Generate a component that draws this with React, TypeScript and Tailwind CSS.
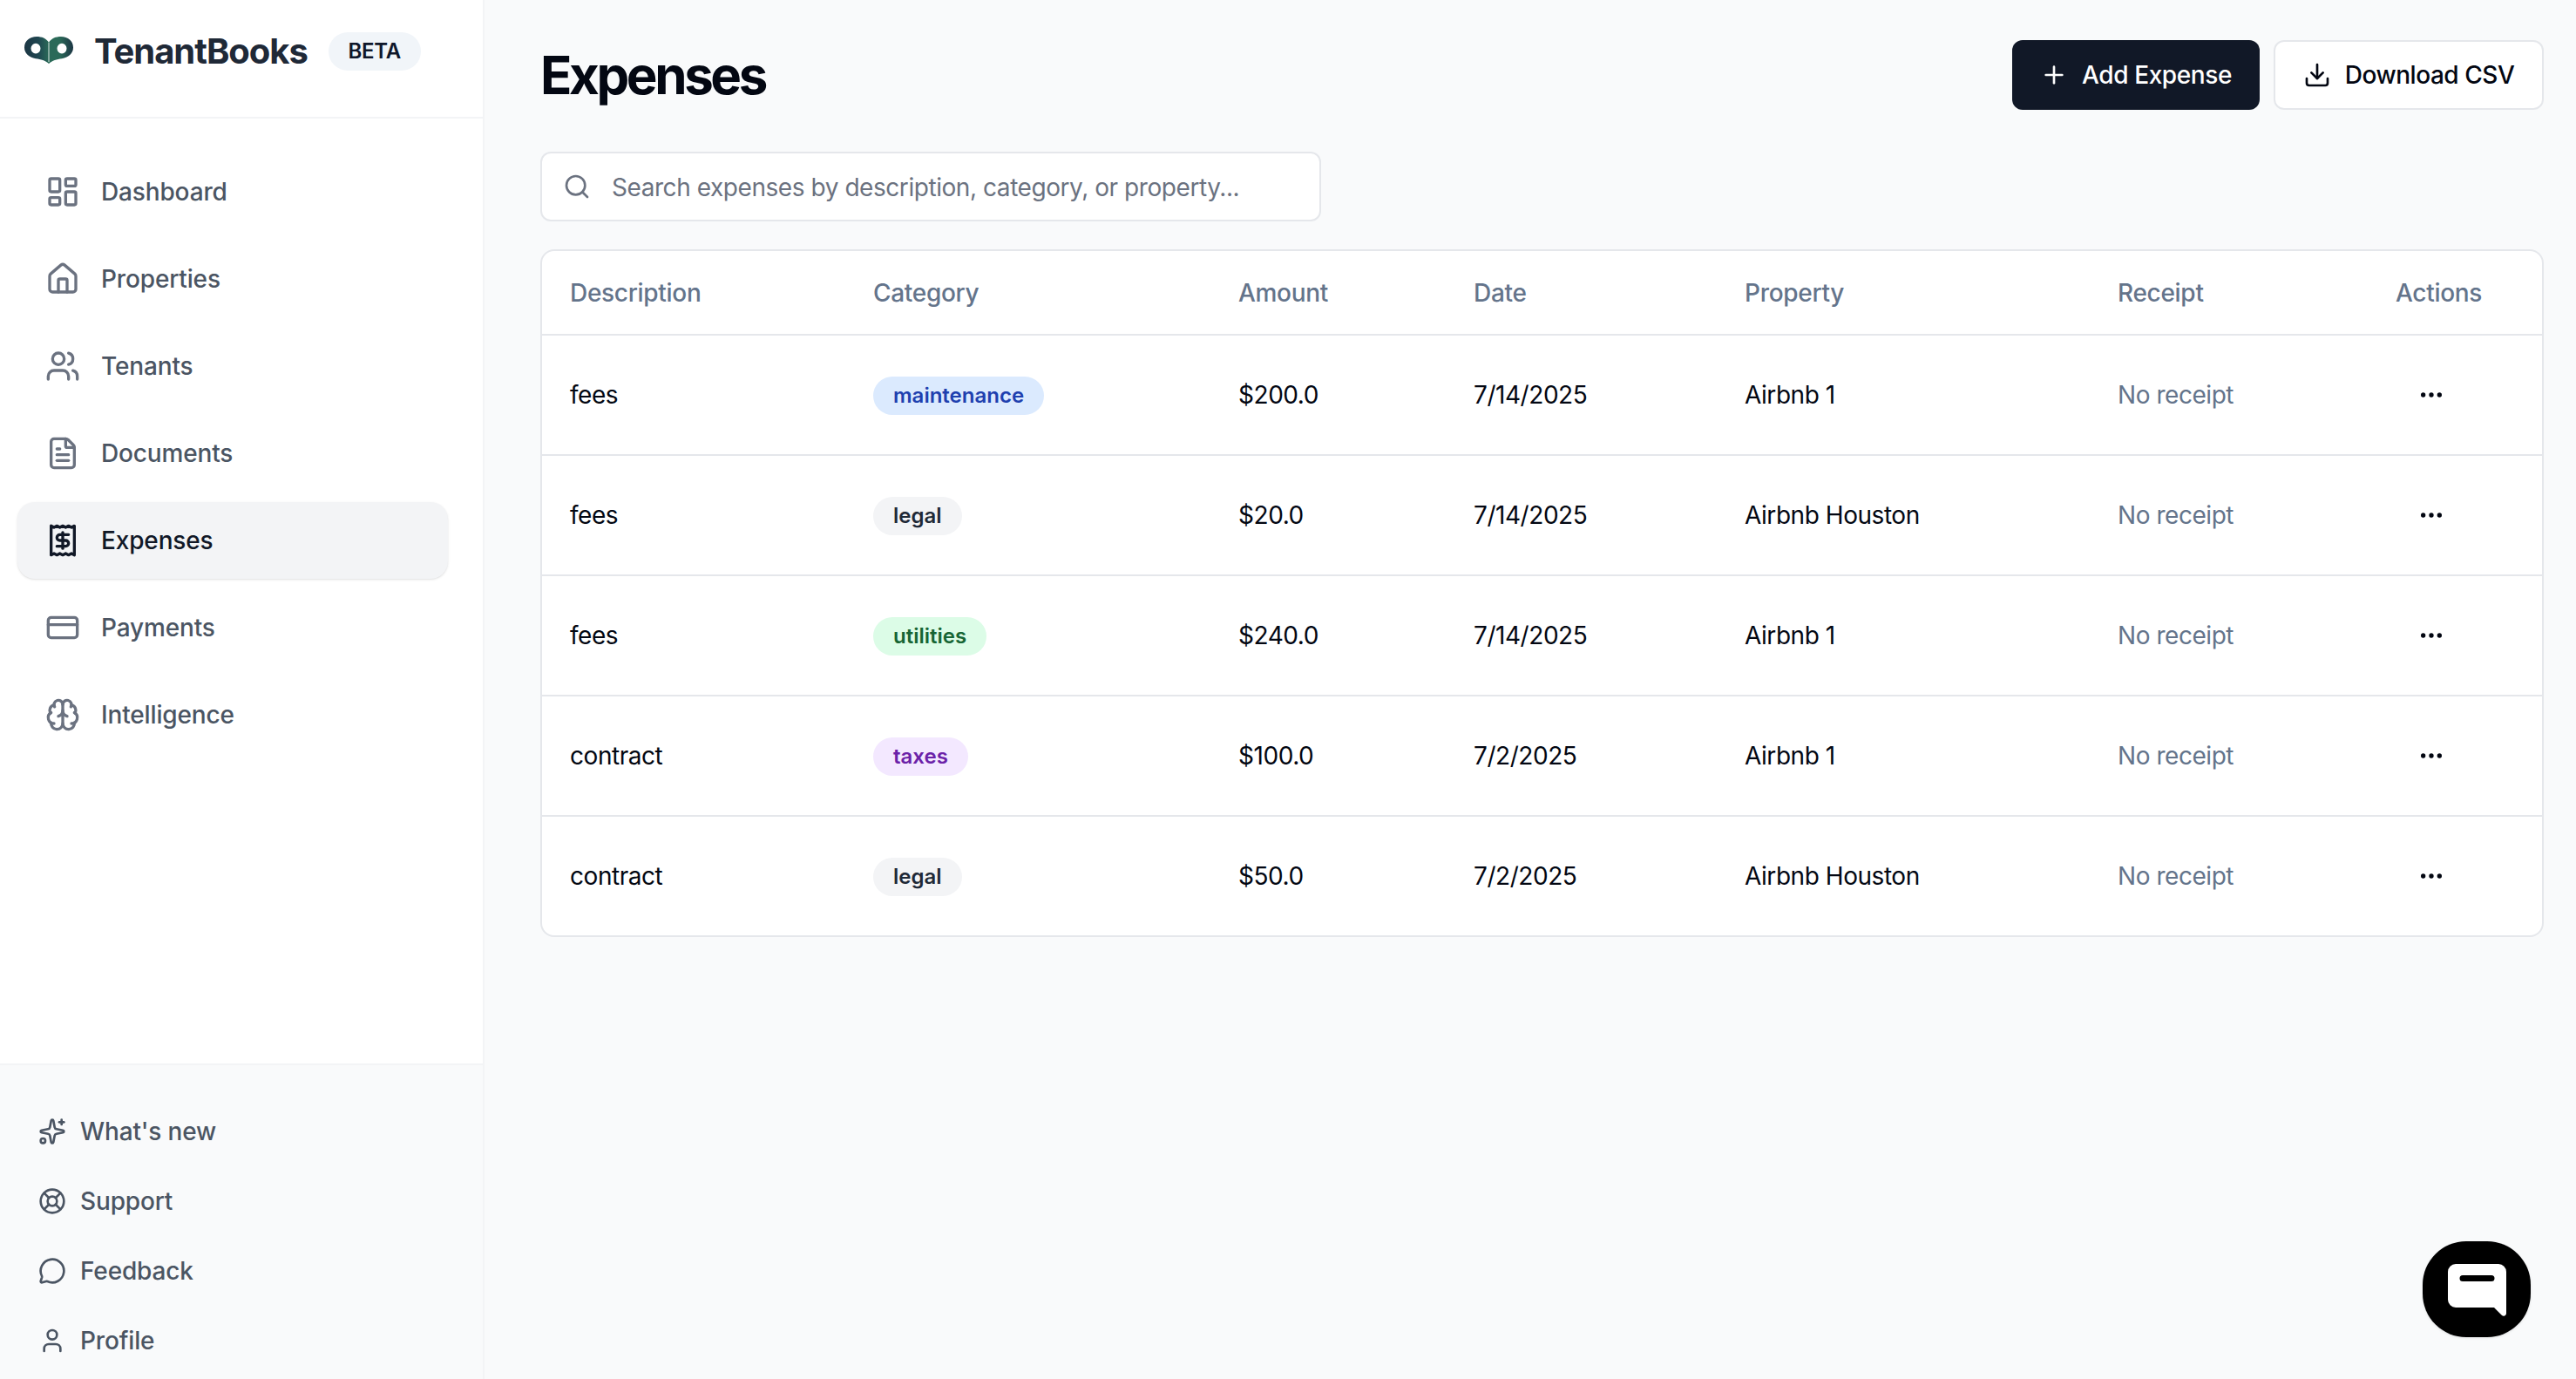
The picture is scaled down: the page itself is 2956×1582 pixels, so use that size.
import React from "react";
import {
  LayoutDashboard, House, Users, FileText, Receipt, CreditCard, Brain,
  Sparkles, LifeBuoy, MessageCircle, User, Plus, Download, Search, Ellipsis,
} from "lucide-react";

const nav = [
  { label: "Dashboard", Icon: LayoutDashboard },
  { label: "Properties", Icon: House },
  { label: "Tenants", Icon: Users },
  { label: "Documents", Icon: FileText },
  { label: "Expenses", Icon: Receipt, active: true },
  { label: "Payments", Icon: CreditCard },
  { label: "Intelligence", Icon: Brain },
];

const footer = [
  { label: "What's new", Icon: Sparkles },
  { label: "Support", Icon: LifeBuoy },
  { label: "Feedback", Icon: MessageCircle },
  { label: "Profile", Icon: User },
];

const badge: Record<string, string> = {
  maintenance: "bg-[#dbeafe] text-[#1e40af]",
  legal: "bg-[#f3f4f6] text-[#1f2937]",
  utilities: "bg-[#dcfce7] text-[#166534]",
  taxes: "bg-[#f3e8ff] text-[#6b21a8]",
};

const rows = [
  ["fees", "maintenance", "$200.0", "7/14/2025", "Airbnb 1"],
  ["fees", "legal", "$20.0", "7/14/2025", "Airbnb Houston"],
  ["fees", "utilities", "$240.0", "7/14/2025", "Airbnb 1"],
  ["contract", "taxes", "$100.0", "7/2/2025", "Airbnb 1"],
  ["contract", "legal", "$50.0", "7/2/2025", "Airbnb Houston"],
];

function Logo() {
  return (
    <svg width="56" height="31" viewBox="0 1 56 32" preserveAspectRatio="none" className="mb-[4px] shrink-0">
      <defs>
        <linearGradient id="book" x1="0" x2="1" y1="0" y2="0">
          <stop offset="0" stopColor="#1c3644" />
          <stop offset="0.28" stopColor="#1f4650" />
          <stop offset="0.5" stopColor="#2a6a58" />
          <stop offset="0.72" stopColor="#2a6a58" />
          <stop offset="1" stopColor="#1c3644" />
        </linearGradient>
      </defs>
      <path
        fillRule="evenodd"
        fill="url(#book)"
        d="M28 33C24 29 19 28 13 27C5 25.500 0 21 0 14C0 6 6 1 14 1C20 1 25 3 28 8C31 3 36 1 42 1C50 1 56 6 56 14C56 21 51 25.500 43 27C37 28 32 29 28 33ZM13 9A5.500 6 0 1 0 13.010 21A5.500 6 0 1 0 13 9ZM43 9A5.500 6 0 1 0 43.010 21A5.500 6 0 1 0 43 9Z"
      />
      <path d="M28 8V31" stroke="#dfeae6" strokeWidth="1" />
    </svg>
  );
}

export default function App() {
  return (
    <div className="flex h-screen w-full overflow-hidden bg-[#f9fafb] font-['Inter',sans-serif] antialiased">
      <aside className="flex h-full w-[556px] shrink-0 flex-col border-r-2 border-[#f3f4f6] bg-white">
        <div className="flex h-[136px] shrink-0 items-center gap-[24px] border-b-2 border-[#f3f4f6] pb-[16px] pl-[28px]">
          <Logo />
          <span className="text-[40px] leading-[56px] font-bold tracking-[-1.05px] text-[#1f2937]">TenantBooks</span>
          <span className="flex h-[44px] w-[106px] items-center justify-center rounded-full bg-[#f1f5f9] text-[24px] font-semibold tracking-[-0.2px] text-[#0f172a]">BETA</span>
        </div>
        <nav className="flex flex-1 flex-col gap-[12px] pt-[40px] pr-[40px] pl-[20px]">
          {nav.map(({ label, Icon, active }) => (
            <div
              key={label}
              className={
                active
                  ? "flex h-[88px] items-center gap-[24px] rounded-[20px] bg-[#f3f4f6] pl-[32px] text-[28px] font-medium tracking-[-0.15px] text-[#111827] shadow-sm"
                  : "flex h-[88px] items-center gap-[24px] rounded-[20px] pl-[32px] text-[28px] font-medium tracking-[-0.15px] text-[#4b5563]"
              }
            >
              <Icon size={40} className={active ? "text-[#111827]" : "text-[#6b7280]"} />
              <span>{label}</span>
            </div>
          ))}
        </nav>
        <div className="flex shrink-0 flex-col border-t-2 border-[#f3f4f6] bg-[#f9fafb] pt-[36px] pb-[4px] pl-[44px]">
          {footer.map(({ label, Icon }) => (
            <div key={label} className="flex h-[80px] items-center gap-[16px] text-[28px] font-medium tracking-[-0.15px] text-[#4b5563]">
              <Icon size={32} />
              <span>{label}</span>
            </div>
          ))}
        </div>
      </aside>

      <main className="flex min-w-0 flex-1 flex-col pt-[46px] pr-[37px] pl-[64px]">
        <div className="flex items-center justify-between">
          <h1 className="text-[60px] leading-[80px] font-bold tracking-[-3.4px] text-[#030712]">Expenses</h1>
          <div className="flex gap-[16px]">
            <button className="flex h-[80px] w-[284px] items-center justify-center gap-[16px] rounded-[12px] bg-[#111827] text-[28px] font-medium tracking-[-0.4px] text-white">
              <Plus size={32} />
              Add Expense
            </button>
            <button className="flex h-[80px] w-[310px] items-center justify-center gap-[16px] rounded-[12px] border-2 border-[#e5e7eb] bg-white text-[28px] font-medium tracking-[-0.45px] text-[#030712]">
              <Download size={32} />
              Download CSV
            </button>
          </div>
        </div>

        <div className="mt-[48px] flex h-[80px] w-[896px] items-center gap-[24px] rounded-[12px] border-2 border-[#e5e7eb] bg-white pl-[24px]">
          <Search size={32} className="shrink-0 text-[#6b7280]" />
          <span className="pt-[2px] text-[28px] tracking-[-0.44px] text-[#6b7280]">Search expenses by description, category, or property...</span>
        </div>

        <div className="mt-[32px] overflow-hidden rounded-[16px] border-2 border-[#e5e7eb] bg-white">
          <table className="w-full table-fixed border-separate border-spacing-0 text-left">
            <thead>
              <tr className="text-[28px] font-medium tracking-[-0.3px] text-[#64748b]">
                <th className="h-[97px] w-[348px] border-b-2 border-[#e5e7eb] pl-[32px] font-medium">Description</th>
                <th className="h-[97px] w-[419px] border-b-2 border-[#e5e7eb] pl-[32px] font-medium">Category</th>
                <th className="h-[97px] w-[270px] border-b-2 border-[#e5e7eb] pl-[32px] font-medium">Amount</th>
                <th className="h-[97px] w-[311px] border-b-2 border-[#e5e7eb] pl-[32px] font-medium">Date</th>
                <th className="h-[97px] w-[428px] border-b-2 border-[#e5e7eb] pl-[32px] font-medium">Property</th>
                <th className="h-[97px] w-[319px] border-b-2 border-[#e5e7eb] pl-[32px] font-medium">Receipt</th>
                <th className="h-[97px] border-b-2 border-[#e5e7eb] pl-[32px] font-medium">Actions</th>
              </tr>
            </thead>
            <tbody className="text-[28px] tracking-[-0.45px] text-[#030712]">
              {rows.map((r, i) => {
                const cell =
                  i < rows.length - 1
                    ? "h-[138px] border-b-2 border-[#e5e7eb] pl-[32px]"
                    : "h-[136px] pl-[32px]";
                return (
                  <tr key={i}>
                    <td className={cell}>{r[0]}</td>
                    <td className={cell}>
                      <span className={"inline-flex h-[44px] items-center rounded-full px-[23px] text-[24px] font-semibold tracking-normal " + badge[r[1]]}>{r[1]}</span>
                    </td>
                    <td className={cell}>{r[2]}</td>
                    <td className={cell}>{r[3]}</td>
                    <td className={cell}>{r[4]}</td>
                    <td className={cell + " text-[#64748b]"}>No receipt</td>
                    <td className={cell}>
                      <button className="ml-[9px] flex h-[64px] w-[64px] items-center justify-center">
                        <Ellipsis size={32} />
                      </button>
                    </td>
                  </tr>
                );
              })}
            </tbody>
          </table>
        </div>
      </main>

      <div className="fixed right-[52px] bottom-[48px] flex h-[110px] w-[124px] items-center justify-center rounded-[50px] bg-black shadow-sm">
        <svg width="67" height="60" viewBox="0 0 67 60" className="mt-[2px]">
          <path
            fill="#fff"
            fillRule="evenodd"
            d="M9 0H58A9 9 0 0 1 67 9V57A3 3 0 0 1 62 59L53 50H9A9 9 0 0 1 0 41V9A9 9 0 0 1 9 0ZM17 13A3.500 3.500 0 0 0 17 20H50A3.500 3.500 0 0 0 50 13Z"
          />
        </svg>
      </div>
    </div>
  );
}
